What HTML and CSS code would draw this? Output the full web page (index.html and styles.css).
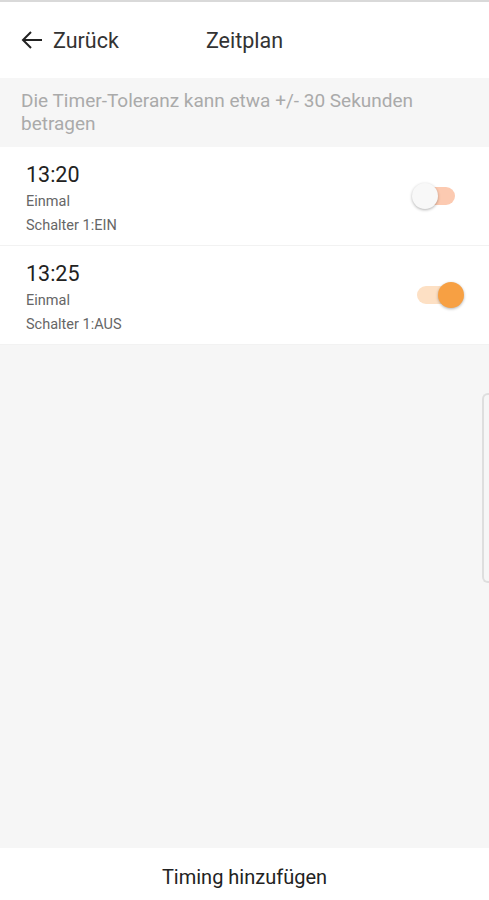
FILE: index.html
```html
<!DOCTYPE html>
<html lang="de">
<head>
    <meta charset="UTF-8">
    <meta name="viewport" content="width=device-width, initial-scale=1.0">
    <title>Zeitplan</title>
    <link rel="stylesheet" href="styles.css">
</head>
<body>
    <div class="app">
        <header class="topbar">
            <a class="back" href="#">
                <svg class="back-icon" width="24" height="24" viewBox="0 0 24 24">
                    <path d="M22 12H3.5M11 4l-8 8 8 8" fill="none" stroke="#222" stroke-width="2"/>
                </svg>
                <span>Zurück</span>
            </a>
            <h1 class="title">Zeitplan</h1>
        </header>

        <p class="notice">Die Timer-Toleranz kann etwa +/- 30 Sekunden betragen</p>

        <ul class="timers">
            <li class="timer">
                <div class="timer-info">
                    <div class="timer-time">13:20</div>
                    <div class="timer-meta">Einmal</div>
                    <div class="timer-meta">Schalter 1:EIN</div>
                </div>
                <span class="switch"><span class="knob"></span></span>
            </li>
            <li class="timer">
                <div class="timer-info">
                    <div class="timer-time">13:25</div>
                    <div class="timer-meta">Einmal</div>
                    <div class="timer-meta">Schalter 1:AUS</div>
                </div>
                <span class="switch on"><span class="knob"></span></span>
            </li>
        </ul>

        <div class="filler"></div>

        <footer class="add-bar">Timing hinzufügen</footer>

        <div class="edge-handle"></div>
    </div>
</body>
</html>
```

FILE: styles.css
```css
body {
    margin: 0;
    font-family: Roboto, "Noto Sans", sans-serif;
    background-color: #f6f6f6;
}
.app {
    position: relative;
    display: flex;
    flex-direction: column;
    height: 900px;
    border-top: 2px solid #d9d9d9;
    box-sizing: border-box;
}
.topbar {
    position: relative;
    display: flex;
    align-items: center;
    height: 76px;
    background-color: #fff;
    padding: 0 20px;
}
.back {
    display: flex;
    align-items: center;
    gap: 9px;
    color: #333;
    text-decoration: none;
    font-size: 21.5px;
}
.title {
    position: absolute;
    left: 0;
    right: 0;
    margin: 0;
    text-align: center;
    font-size: 21.5px;
    font-weight: normal;
    color: #333;
    pointer-events: none;
}
.notice {
    margin: 0;
    padding: 11px 60px 12px 21px;
    font-size: 19px;
    line-height: 23px;
    color: #aaa;
    background-color: #f6f6f6;
}
.timers {
    list-style: none;
    margin: 0;
    padding: 0;
}
.timer {
    display: flex;
    align-items: flex-start;
    justify-content: space-between;
    height: 99px;
    padding: 15px 34px 0 26px;
    background-color: #fff;
    border-bottom: 1px solid #f2f2f2;
    box-sizing: border-box;
}
.timer-time {
    font-size: 21.5px;
    color: #222;
    line-height: 26px;
    margin-bottom: 2px;
}
.timer-meta {
    font-size: 14.5px;
    color: #666;
    line-height: 24px;
}
.switch {
    position: relative;
    align-self: center;
    margin-top: -16px;
    width: 38px;
    height: 18px;
    border-radius: 9px;
    background-color: #fccab1;
}
.switch .knob {
    position: absolute;
    top: -4px;
    left: -5px;
    width: 26px;
    height: 26px;
    border-radius: 50%;
    background-color: #f8f8f8;
    box-shadow: 0 1px 3px rgba(0, 0, 0, 0.3);
}
.switch.on {
    background-color: #fde0c4;
}
.switch.on .knob {
    left: auto;
    right: -9px;
    background-color: #f7a043;
}
.filler {
    flex: 1;
}
.add-bar {
    height: 52px;
    padding-top: 6px;
    box-sizing: border-box;
    display: flex;
    align-items: center;
    justify-content: center;
    background-color: #fff;
    font-size: 20px;
    color: #222;
}
.edge-handle {
    position: absolute;
    top: 391px;
    right: 0;
    width: 5px;
    height: 186px;
    border: 2px solid #dedede;
    border-right: none;
    border-radius: 6px 0 0 6px;
}
```
